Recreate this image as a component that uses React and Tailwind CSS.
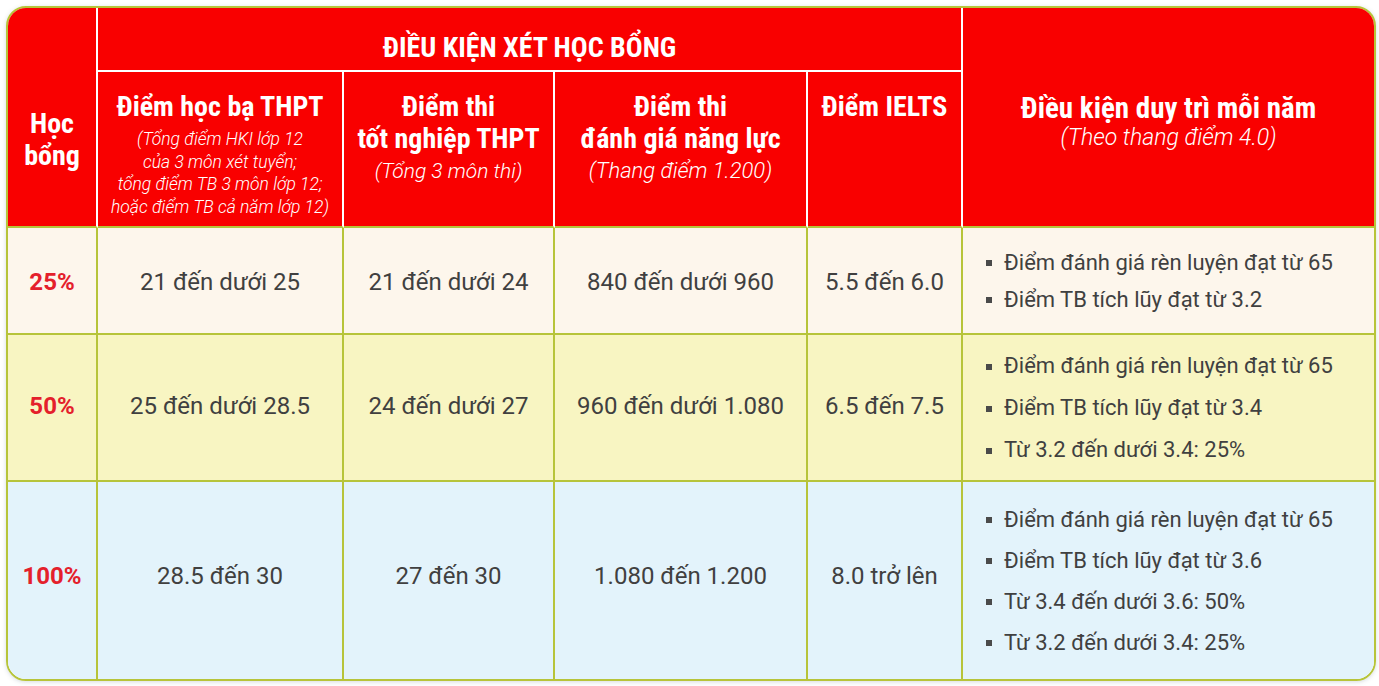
import React from "react";

const rows = [
  {
    pct: "25%",
    hocBa: "21 đến dưới 25",
    totNghiep: "21 đến dưới 24",
    nangLuc: "840 đến dưới 960",
    ielts: "5.5 đến 6.0",
    conds: ["Điểm đánh giá rèn luyện đạt từ 65", "Điểm TB tích lũy đạt từ 3.2"],
    bg: "bg-[#fdf6ec]",
    height: "h-[107px]",
    lead: "leading-[37px]",
    shift: "pt-[3px]",
    last: false,
  },
  {
    pct: "50%",
    hocBa: "25 đến dưới 28.5",
    totNghiep: "24 đến dưới 27",
    nangLuc: "960 đến dưới 1.080",
    ielts: "6.5 đến 7.5",
    conds: [
      "Điểm đánh giá rèn luyện đạt từ 65",
      "Điểm TB tích lũy đạt từ 3.4",
      "Từ 3.2 đến dưới 3.4: 25%",
    ],
    bg: "bg-[#f8f5c2]",
    height: "h-[147px]",
    lead: "leading-[42px]",
    shift: "pb-[3px]",
    last: false,
  },
  {
    pct: "100%",
    hocBa: "28.5 đến 30",
    totNghiep: "27 đến 30",
    nangLuc: "1.080 đến 1.200",
    ielts: "8.0 trở lên",
    conds: [
      "Điểm đánh giá rèn luyện đạt từ 65",
      "Điểm TB tích lũy đạt từ 3.6",
      "Từ 3.4 đến dưới 3.6: 50%",
      "Từ 3.2 đến dưới 3.4: 25%",
    ],
    bg: "bg-[#e3f3fb]",
    height: "h-[197px]",
    lead: "leading-[41px]",
    shift: "pb-[9px]",
    last: true,
  },
];

const head = "font-['Liberation_Sans_Narrow','Roboto_Condensed',Roboto,sans-serif] font-bold text-[28px] leading-[32px]";
const sub = "font-['Roboto',sans-serif] font-light italic";

const App = () => {
  return (
    <div className="bg-white p-[6px] w-[1379px] h-[686px]">
      <div className="w-[1370px] rounded-[20px] border-2 border-[#b7c43a] overflow-hidden shadow-[0_1px_4px_rgba(90,110,130,0.25)]">
        <table className="w-full table-fixed border-separate border-spacing-0 text-white">
          <colgroup>
            <col className="w-[90px]" />
            <col className="w-[246px]" />
            <col className="w-[211px]" />
            <col className="w-[253px]" />
            <col className="w-[155px]" />
            <col className="w-[411px]" />
          </colgroup>
          <thead className="bg-[#f90000]">
            <tr className="h-[64px]">
              <th
                rowSpan={2}
                className={`${head} align-top pt-[100px] border-r-2 border-b-2 border-r-white border-b-[#b7c43a]`}>
                Học
                <br />
                bổng
              </th>
              <th
                colSpan={4}
                className={`${head} text-[27px] align-top pt-[24px] border-r-2 border-b-2 border-white`}>
                ĐIỀU KIỆN XÉT HỌC BỔNG
              </th>
              <th rowSpan={2} className="align-top pt-[84px] border-b-2 border-[#b7c43a]">
                <div className={`${head} text-[29px]`}>Điều kiện duy trì mỗi năm</div>
                <div className={`${sub} text-[23px] leading-[28px]`}>(Theo thang điểm 4.0)</div>
              </th>
            </tr>
            <tr className="h-[156px]">
              <th className="align-top pt-[19px] border-r-2 border-b-2 border-r-white border-b-[#b7c43a]">
                <div className={head}>Điểm học bạ THPT</div>
                <div className={`${sub} text-[17.5px] leading-[22.5px] mt-[5px]`}>
                  (Tổng điểm HKI lớp 12
                  <br />
                  của 3 môn xét tuyển;
                  <br />
                  tổng điểm TB 3 môn lớp 12;
                  <br />
                  hoặc điểm TB cả năm lớp 12)
                </div>
              </th>
              <th className="align-top pt-[19px] border-r-2 border-b-2 border-r-white border-b-[#b7c43a]">
                <div className={head}>
                  Điểm thi
                  <br />
                  tốt nghiệp THPT
                </div>
                <div className={`${sub} text-[21px] leading-[26px] mt-[3px]`}>(Tổng 3 môn thi)</div>
              </th>
              <th className="align-top pt-[19px] border-r-2 border-b-2 border-r-white border-b-[#b7c43a]">
                <div className={head}>
                  Điểm thi
                  <br />
                  đánh giá năng lực
                </div>
                <div className={`${sub} text-[22px] leading-[26px] mt-[3px]`}>(Thang điểm 1.200)</div>
              </th>
              <th className="align-top pt-[19px] border-r-2 border-b-2 border-r-white border-b-[#b7c43a]">
                <div className={head}>Điểm IELTS</div>
              </th>
            </tr>
          </thead>
          <tbody className="font-['Roboto',sans-serif] text-[#404040]">
            {rows.map((row, idx) => {
              const cell = `border-r-2 border-[#b7c43a] ${row.last ? "" : "border-b-2"} ${row.shift}`;
              return (
                <tr key={idx} className={`${row.bg} ${row.height}`}>
                  <td className={`${cell} text-center font-bold text-[24px] text-[#e4202b]`}>{row.pct}</td>
                  <td className={`${cell} text-center text-[24px]`}>{row.hocBa}</td>
                  <td className={`${cell} text-center text-[24px]`}>{row.totNghiep}</td>
                  <td className={`${cell} text-center text-[24px]`}>{row.nangLuc}</td>
                  <td className={`${cell} text-center text-[24px]`}>{row.ielts}</td>
                  <td className={`${row.last ? "" : "border-b-2"} border-[#b7c43a] pl-[23px]`}>
                    <ul className={`text-[22px] ${row.lead}`}>
                      {row.conds.map((c, i) => (
                        <li key={i} className="flex items-center">
                          <span className="w-[6px] h-[6px] bg-[#4a4a4a] mr-[12px] mt-[2px] shrink-0" />
                          {c}
                        </li>
                      ))}
                    </ul>
                  </td>
                </tr>
              );
            })}
          </tbody>
        </table>
      </div>
    </div>
  );
};

export default App;
